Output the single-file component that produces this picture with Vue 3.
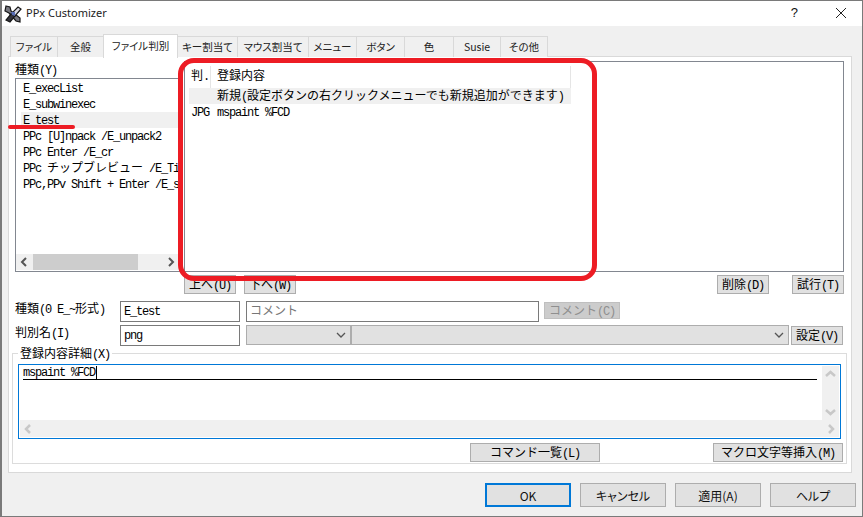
<script setup>
import { h } from 'vue'

// Renders half-width runs and full-width runs separately, to imitate a bitmap gothic face.
const M = (props) => {
  const parts = props.t.match(/[\x20-\x7e]+|[^\x20-\x7e]+/g) || []
  return parts.map((p) => h('span', { class: /^[\x20-\x7e]/.test(p) ? 'lat' : 'cjk' }, p))
}
M.props = ['t']

const tabs = ['ファイル', '全般', 'ファイル判別', 'キー割当て', 'マウス割当て', 'メニュー', 'ボタン', '色', 'Susie', 'その他']
const kinds = [
  'E_execList',
  'E_subwinexec',
  'E_test',
  'PPc [U]npack /E_unpack2',
  'PPc Enter /E_cr',
  'PPc チップブレビュー /E_Tip',
  'PPc,PPv Shift + Enter /E_shift',
]
</script>

<template>
  <div class="window">
    <header class="title">
      <svg class="appicon" width="18" height="18" viewBox="0 0 18 18">
        <path d="M2 1 L6 2 L7 6 L16 13 L16 17 L12 16 L5 8 L1 6 Z" fill="#77777f" stroke="#161616" stroke-width="1.2" />
        <path d="M14 2 L17 4 L11 11 L7 9 Z" fill="#d9d9e3" stroke="#161616" stroke-width="1.2" />
        <path d="M7 9 L11 11 L6 17 L2 15 Z" fill="#34343c" stroke="#161616" stroke-width="1.2" />
        <path d="M7 7 L11 7 L11 11 L8 10 Z" fill="#5a6fb5" />
      </svg>
      <span class="title-text">PPx Customizer</span>
      <span class="help">?</span>
      <svg class="close" width="10" height="10" viewBox="0 0 10 10">
        <path d="M0 0 L10 10 M10 0 L0 10" stroke="#222" stroke-width="1" fill="none" />
      </svg>
    </header>

    <div class="client">
      <nav class="tabs">
        <div v-for="(tab, i) in tabs" :key="tab" class="tab" :class="{ active: i === 2 }">{{ tab }}</div>
      </nav>

      <section class="panel">
        <div class="lists">
          <div class="left">
            <div class="caption"><M t="種類(Y)" /></div>
            <div class="listbox">
              <div class="rows">
                <div v-for="(k, i) in kinds" :key="k" class="row" :class="{ sel: i === 2 }"><M :t="k" /></div>
              </div>
              <div class="hscroll">
                <svg width="17" height="16" viewBox="0 0 17 16"><path d="M10 4 L6 8 L10 12" stroke="#555" stroke-width="2" fill="none" /></svg>
                <div class="track"><div class="thumb"></div></div>
                <svg width="17" height="16" viewBox="0 0 17 16"><path d="M7 4 L11 8 L7 12" stroke="#555" stroke-width="2" fill="none" /></svg>
              </div>
            </div>
          </div>

          <div class="detail">
            <div class="thead">
              <div class="th th1"><M t="判." /></div>
              <div class="th th2"><M t="登録内容" /></div>
            </div>
            <div class="tr zebra"><span class="c1"></span><span class="c2"><M t="新規(設定ボタンの右クリックメニューでも新規追加ができます)" /></span></div>
            <div class="tr"><span class="c1"><M t="JPG" /></span><span class="c2"><M t="mspaint %FCD" /></span></div>
          </div>
        </div>

        <div class="listbuttons">
          <button class="btn small"><M t="上へ(U)" /></button>
          <button class="btn small"><M t="下へ(W)" /></button>
          <span class="grow"></span>
          <button class="btn small"><M t="削除(D)" /></button>
          <button class="btn small"><M t="試行(T)" /></button>
        </div>

        <div class="form first">
          <label class="flabel"><M t="種類(0 E_~形式)" /></label>
          <div class="input name"><M t="E_test" /></div>
          <div class="input comment"><span class="ph"><M t="コメント" /></span></div>
          <button class="btn disabled"><M t="コメント(C)" /></button>
        </div>
        <div class="form second">
          <label class="flabel"><M t="判別名(I)" /></label>
          <div class="input name tall"><M t="png" /></div>
          <div class="combo c-short">
            <svg width="10" height="6" viewBox="0 0 10 6"><path d="M1 1 L5 5 L9 1" stroke="#555" stroke-width="1.3" fill="none" /></svg>
          </div>
          <div class="combo c-long">
            <svg width="10" height="6" viewBox="0 0 10 6"><path d="M1 1 L5 5 L9 1" stroke="#555" stroke-width="1.3" fill="none" /></svg>
          </div>
          <button class="btn small set"><M t="設定(V)" /></button>
        </div>

        <fieldset class="group">
          <legend class="legend"><M t="登録内容詳細(X)" /></legend>
          <div class="editor">
            <div class="editor-main">
              <div class="edit-area">
                <div class="edit-line"><M t="mspaint %FCD" /><i class="caret"></i></div>
              </div>
              <div class="vscroll">
                <svg width="17" height="16" viewBox="0 0 17 16"><path d="M4 10 L8.500 6 L13 10" stroke="#c8c8c8" stroke-width="2.500" fill="none" /></svg>
                <svg width="17" height="16" viewBox="0 0 17 16"><path d="M4 6 L8.500 10 L13 6" stroke="#c8c8c8" stroke-width="2.500" fill="none" /></svg>
              </div>
            </div>
            <div class="hscroll2">
              <svg width="17" height="16" viewBox="0 0 17 16"><path d="M10 4 L6 8 L10 12" stroke="#c8c8c8" stroke-width="2.500" fill="none" /></svg>
              <svg class="hs-right" width="17" height="16" viewBox="0 0 17 16"><path d="M7 4 L11 8 L7 12" stroke="#c8c8c8" stroke-width="2.500" fill="none" /></svg>
            </div>
          </div>
          <div class="groupbuttons">
            <button class="btn wide"><M t="コマンド一覧(L)" /></button>
            <button class="btn wide"><M t="マクロ文字等挿入(M)" /></button>
          </div>
        </fieldset>
      </section>

      <footer class="footer">
        <button class="dbtn default">OK</button>
        <button class="dbtn">キャンセル</button>
        <button class="dbtn">適用(A)</button>
        <button class="dbtn">ヘルプ</button>
      </footer>
    </div>

    <div class="mark-box"></div>
    <div class="mark-line"></div>
  </div>
</template>

<style>
html, body { margin: 0; padding: 0; background: #f0f0f0; }
.lat {
  font-family: "Liberation Mono", monospace;
  font-size: 12px;
  letter-spacing: -1.2px;
  color: #000;
}
.cjk {
  font-family: "Noto Sans CJK JP", sans-serif;
  font-size: 12px;
  font-weight: 400;
  color: #000;
}
.ph .cjk { color: #777; }
.disabled .cjk, .disabled .lat { color: #8f8f8f; }
</style>

<style scoped>
.window {
  position: relative;
  width: 863px;
  height: 517px;
  box-sizing: border-box;
  border: 1px solid #7a7a7a;
  border-left-width: 2px;
  display: flex;
  flex-direction: column;
  background: #f0f0f0;
  overflow: hidden;
  font-family: "Noto Sans CJK JP", sans-serif;
  font-size: 12px;
  color: #111;
}
.title {
  height: 25px;
  flex: none;
  background: #fff;
  display: flex;
  align-items: center;
}
.appicon { margin-left: 2px; }
.title-text {
  margin-left: 4px;
  margin-bottom: 2px;
  font-family: "Noto Sans", sans-serif;
  font-size: 11px;
  color: #222;
}
.help {
  margin-left: auto;
  margin-bottom: 2px;
  font-family: "Liberation Sans", sans-serif;
  font-size: 13px;
  margin-right: 38px;
}
.close { margin-right: 16px; margin-bottom: 1px; }
.client {
  flex: 1;
  display: flex;
  flex-direction: column;
  min-height: 0;
}
.tabs {
  margin: 10px 0 0 8px;
  height: 20px;
  display: grid;
  grid-template-columns: 48px 46px 74px 60px 71px 48px 48px 49px 47px 47px;
  width: max-content;
  position: relative;
  z-index: 1;
}
.tab {
  box-sizing: border-box;
  height: 21px;
  border: 1px solid #d9d9d9;
  border-bottom: 0;
  border-left-width: 0;
  background: #f0f0f0;
  font-size: 10.5px;
  line-height: 19px;
  text-align: center;
  white-space: nowrap;
  font-feature-settings: "palt";
  color: #222;
}
.tab:first-child { border-left-width: 1px; }
.tab.active {
  height: 24px;
  margin-top: -2px;
  background: #fff;
  border-left-width: 1px;
  line-height: 22px;
  margin-left: -1px;
}
.panel {
  box-sizing: border-box;
  margin: 0 10px 0 6px;
  height: 417px;
  flex: none;
  background: #fff;
  border: 1px solid #d9d9d9;
  padding: 4px 7px 0 6px;
}
.lists {
  display: flex;
  gap: 4px;
  height: 211px;
}
.left {
  width: 165px;
  flex: none;
  display: flex;
  flex-direction: column;
}
.caption {
  height: 17px;
  line-height: 14px;
  padding-top: 1px;
  box-sizing: border-box;
}
.listbox {
  flex: none;
  height: 194px;
  box-sizing: border-box;
  border: 1px solid #828790;
  display: flex;
  flex-direction: column;
  overflow: hidden;
}
.rows {
  flex: 1;
  padding: 1px 0 0 5px;
  overflow: hidden;
}
.row {
  height: 16px;
  line-height: 14px;
  padding-left: 2px;
  white-space: nowrap;
}
.row.sel { background: #f0f0f0; }
.hscroll {
  height: 16px;
  flex: none;
  display: flex;
  background: #f0f0f0;
  margin-bottom: 1px;
}
.track { flex: 1; display: flex; }
.thumb { width: 105px; background: #cdcdcd; }
.detail {
  flex: 1;
  height: 211px;
  box-sizing: border-box;
  border: 1px solid #828790;
  margin-top: 0;
  padding: 4px 0 0 4px;
}
.thead { display: flex; height: 22px; width: 382px; }
.th {
  box-sizing: border-box;
  padding-left: 2px;
  line-height: 17px;
}
.th1 { width: 22px; border-right: 1px solid #e5e5e5; }
.th2 { flex: 1; padding-left: 6px; border-right: 1px solid #e5e5e5; }
.tr { display: flex; height: 16px; line-height: 14px; width: 382px; white-space: nowrap; }
.tr.zebra { background: #f0f0f0; }
.c1 { width: 22px; padding-left: 2px; box-sizing: border-box; }
.c2 { padding-left: 6px; }
.listbuttons {
  display: flex;
  margin-top: 3px;
  padding-left: 169px;
  gap: 8px;
}
.listbuttons .btn:nth-last-child(1) { margin-left: 15px; }
.grow { flex: 1; }
.btn {
  box-sizing: border-box;
  background: #e1e1e1;
  border: 1px solid #adadad;
  padding: 0;
  height: 19px;
  line-height: 16px;
  font-family: inherit;
  color: #111;
  white-space: nowrap;
}
.small { width: 52px; }
.form { display: flex; align-items: flex-start; }
.form.first { margin-top: 7px; }
.form.second { margin-top: 3px; }
.flabel {
  width: 105px;
  flex: none;
  line-height: 14px;
  white-space: nowrap;
}
.input {
  box-sizing: border-box;
  height: 21px;
  border: 1px solid #7a7a7a;
  background: #fff;
  line-height: 15px;
  padding-left: 3px;
}
.name { width: 120px; flex: none; }
.tall { height: 21px; }
.comment { width: 293px; margin-left: 6px; flex: none; }
.btn.disabled {
  width: 76px;
  height: 17px;
  margin: 1px 0 0 5px;
  background: #cccccc;
  border-color: #bfbfbf;
  color: #8f8f8f;
  line-height: 14px;
}
.combo {
  box-sizing: border-box;
  height: 20px;
  background: #e1e1e1;
  border: 1px solid #adadad;
  display: flex;
  align-items: center;
  justify-content: flex-end;
  padding-right: 4px;
}
.c-short { width: 105px; margin-left: 6px; flex: none; }
.c-long { width: 438px; margin-left: 0; flex: none; }
.set { margin: 1px 0 0 2px; flex: none; }
.group {
  box-sizing: border-box;
  margin: 0 -3px 0 -3px;
  min-width: 0;
  height: 118px;
  margin-top: 0;
  padding: 0 5px 0 5px;
  border: 1px solid #dcdcdc;
}
.legend {
  margin-left: 0;
  padding: 0 2px;
  line-height: 13px;
  height: 14px;
}
.editor {
  margin-top: 4px;
  height: 75px;
  box-sizing: border-box;
  border: 1px solid #0078d7;
  background: #fff;
  display: flex;
  flex-direction: column;
  padding: 1px 1px 1px 1px;
}
.editor-main { flex: 1; display: flex; min-height: 0; }
.edit-area { flex: 1; padding: 0 5px 0 3px; }
.edit-line {
  height: 13px;
  line-height: 14px;
  border-bottom: 1px solid #000;
  display: flex;
  align-items: flex-start;
  padding-top: 0;
  white-space: pre;
}
.caret { display: block; width: 1px; height: 13px; background: #000; margin-left: 1px; }
.vscroll {
  width: 17px;
  flex: none;
  background: #f0f0f0;
  display: flex;
  flex-direction: column;
  justify-content: space-between;
}
.hscroll2 {
  height: 17px;
  flex: none;
  background: #f0f0f0;
  display: flex;
  align-items: center;
}
.hs-right { margin-left: auto; }
.groupbuttons {
  display: flex;
  justify-content: flex-end;
  gap: 113px;
  margin-top: 4px;
  margin-right: -2px;
}
.wide { width: 130px; }
.footer {
  display: flex;
  justify-content: flex-end;
  gap: 9px;
  margin-top: 10px;
  padding-right: 6px;
}
.dbtn {
  box-sizing: border-box;
  width: 86px;
  height: 24px;
  background: #e1e1e1;
  border: 1px solid #adadad;
  padding: 0;
  font-family: "Noto Sans CJK JP", sans-serif;
  font-size: 12px;
  font-feature-settings: "palt";
  color: #111;
}
.dbtn.default { border: 2px solid #0078d7; }
.mark-box {
  position: absolute;
  left: 176px;
  top: 57px;
  width: 419px;
  height: 223px;
  box-sizing: border-box;
  border: 5px solid #ed1c24;
  border-radius: 16px;
  z-index: 2;
}
.mark-line {
  position: absolute;
  left: 6px;
  top: 124px;
  width: 67px;
  height: 4px;
  border-radius: 2px;
  background: #ed1c24;
  z-index: 2;
}
</style>
